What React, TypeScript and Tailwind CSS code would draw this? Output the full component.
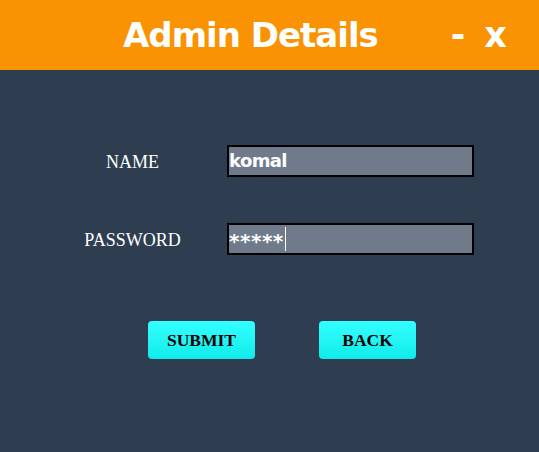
import React from 'react'

export default function App() {
  return (
    <div className="w-[539px] h-[452px] bg-[#2e3e50] overflow-hidden">
      {/* header */}
      <div className="h-[70px] bg-[#fa9304] flex items-center text-white font-bold" style={{ fontFamily: 'Tahoma, "DejaVu Sans", sans-serif' }}>
        <div className="pl-[123px] text-[34px] leading-none tracking-[-1px]">Admin Details</div>
        <div className="ml-[73px] text-[35px] leading-none">-</div>
        <div className="ml-[19px] text-[35px] leading-none">x</div>
      </div>

      {/* form */}
      <div className="pt-[75px]" style={{ fontFamily: '"Liberation Serif", serif' }}>
        <div className="flex items-center h-[32px]">
          <div className="w-[145px] ml-[60px] mt-[3px] text-center text-white text-[18px]">NAME</div>
          <div className="ml-[22px] w-[247px] h-[32px] bg-[#6f7b8b] border-2 border-black flex items-center">
            <span className="text-white font-bold text-[18px] leading-none tracking-[-0.6px]" style={{ fontFamily: 'Tahoma, "DejaVu Sans", sans-serif' }}>komal</span>
          </div>
        </div>
        <div className="flex items-center h-[32px] mt-[46px]">
          <div className="w-[145px] ml-[60px] mt-[3px] text-center text-white text-[18px]">PASSWORD</div>
          <div className="ml-[22px] w-[247px] h-[32px] bg-[#6f7b8b] border-2 border-black flex items-center">
            <span className="text-white font-bold text-[20px] leading-none tracking-[0.5px] mt-[3px]" style={{ fontFamily: '"DejaVu Sans", sans-serif' }}>*****</span>
            <span className="w-px h-[24px] bg-white ml-[1px]"></span>
          </div>
        </div>

        <div className="flex mt-[66px] pl-[148px] gap-[64px]">
          <button className="w-[107px] h-[38px] rounded-[4px] bg-gradient-to-b from-[#33ffff] to-[#0cebeb] text-black font-bold text-[17.5px]">SUBMIT</button>
          <button className="w-[97px] h-[38px] rounded-[4px] bg-gradient-to-b from-[#33ffff] to-[#0cebeb] text-black font-bold text-[17.5px]">BACK</button>
        </div>
      </div>
    </div>
  )
}
